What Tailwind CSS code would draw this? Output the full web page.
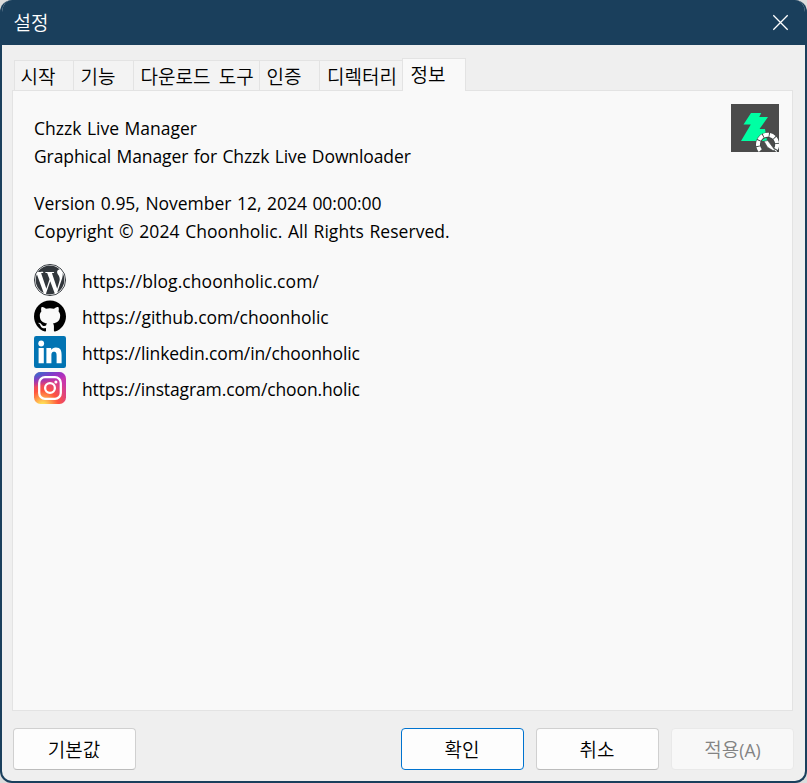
<!DOCTYPE html>
<html lang="ko">
<head>
<meta charset="utf-8">
<title>설정</title>
<script src="https://cdn.jsdelivr.net/npm/@tailwindcss/browser@4"></script>
</head>
<body class="h-[783px] w-[807px] overflow-hidden bg-[#dcdcdc] font-['Open_Sans','Noto_Sans_CJK_KR',sans-serif] text-black">
<div class="flex h-[783px] w-[807px] flex-col overflow-hidden rounded-[12px] border-2 border-t-0 border-[#1a3f5c] bg-[#efefef]">
  <header class="flex h-[45px] shrink-0 items-center justify-between bg-[#1a3f5c] pr-[16px] pl-[11.5px] text-white">
    <h1 class="pb-[2px] font-['Noto_Sans_CJK_KR',sans-serif] text-[19px] leading-none font-[350]">설정</h1>
    <svg class="size-[17px]" viewBox="0 0 17 17" fill="none" stroke="white" stroke-width="1.3"><path d="M1.3 1.3 15.7 15.7M15.7 1.3 1.3 15.7"/></svg>
  </header>
  <nav class="ml-[12px] mt-[13px] flex h-[32px] shrink-0 items-end font-['Noto_Sans_CJK_KR',sans-serif] text-[19px] leading-[30px] font-[350] whitespace-nowrap">
    <div class="h-[30px] w-[59px] border-t border-l border-[#e3e3e3] bg-[#f3f3f3] pl-[5.5px]">시작</div>
    <div class="h-[30px] w-[60px] border-t border-l border-[#e3e3e3] bg-[#f3f3f3] pl-[6.5px]">기능</div>
    <div class="h-[30px] w-[126px] border-t border-l border-[#e3e3e3] bg-[#f3f3f3] pl-[6.5px] [word-spacing:3px]">다운로드 도구</div>
    <div class="h-[30px] w-[60px] border-t border-l border-[#e3e3e3] bg-[#f3f3f3] pl-[6.5px]">인증</div>
    <div class="h-[30px] w-[83px] border-t border-l border-[#e3e3e3] bg-[#f3f3f3] pl-[7px]">디렉터리</div>
    <div class="relative z-10 -mb-px h-[33px] w-[64px] border border-b-0 border-[#e3e3e3] bg-[#f9f9f9] pl-[7.5px]">정보</div>
  </nav>
  <main class="mx-[10px] flex h-[621px] w-[781px] shrink-0 justify-between border border-[#e3e3e3] bg-[#f9f9f9] text-[17.5px] leading-[28px] whitespace-nowrap">
    <div class="pt-[23px] pl-[21px] [word-spacing:1px]">
      <p>Chzzk Live Manager</p>
      <p class="tracking-[-0.1px]">Graphical Manager for Chzzk Live Downloader</p>
      <p class="mt-[19px] tracking-[-0.02px]">Version 0.95, November 12, 2024 00:00:00</p>
      <p class="tracking-[0.05px]">Copyright © 2024 Choonholic. All Rights Reserved.</p>
      <ul class="mt-[19px] flex flex-col gap-1">
        <li class="flex h-8 items-center gap-4">
          <svg class="size-8" viewBox="0 0 24 24" fill="#32373c"><circle cx="12" cy="12" r="11.7" fill="#fff" stroke="#32373c" stroke-width=".7"/><path d="M21.469 6.825c.84 1.537 1.318 3.3 1.318 5.175 0 3.979-2.156 7.456-5.363 9.325l3.295-9.527c.615-1.54.82-2.771.82-3.864 0-.405-.026-.78-.07-1.11m-7.981.105c.647-.03 1.232-.105 1.232-.105.582-.075.514-.93-.067-.899 0 0-1.755.135-2.88.135-1.064 0-2.85-.15-2.85-.15-.585-.03-.661.855-.075.885 0 0 .54.061 1.125.09l1.68 4.605-2.37 7.08L5.354 6.9c.649-.03 1.234-.1 1.234-.1.585-.075.516-.93-.065-.896 0 0-1.746.138-2.874.138-.2 0-.438-.008-.69-.015C4.911 3.15 8.235 1.215 12 1.215c2.809 0 5.365 1.072 7.286 2.833-.046-.003-.091-.009-.141-.009-1.06 0-1.812.923-1.812 1.914 0 .89.513 1.643 1.06 2.531.411.72.89 1.643.89 2.977 0 .915-.354 1.994-.821 3.479l-1.075 3.585-3.9-11.61zM12 22.784c-1.059 0-2.081-.153-3.048-.437l3.237-9.406 3.315 9.087c.024.053.05.101.078.149-1.12.393-2.325.609-3.582.609M1.211 12c0-1.564.336-3.05.935-4.39L7.29 21.709C3.694 19.96 1.212 16.271 1.211 12"/></svg>
          <span class="pt-[2px] tracking-[0.07px]">https://blog.choonholic.com/</span>
        </li>
        <li class="flex h-8 items-center gap-4">
          <svg class="size-8" viewBox="0 0.2 24 23.6"><path d="M12 .297c-6.63 0-12 5.373-12 12 0 5.303 3.438 9.8 8.205 11.385.6.113.82-.258.82-.577 0-.285-.01-1.04-.015-2.04-3.338.724-4.042-1.61-4.042-1.61C4.422 18.07 3.633 17.7 3.633 17.7c-1.087-.744.084-.729.084-.729 1.205.084 1.838 1.236 1.838 1.236 1.07 1.835 2.809 1.305 3.495.998.108-.776.417-1.305.76-1.605-2.665-.3-5.466-1.332-5.466-5.93 0-1.31.465-2.38 1.235-3.22-.135-.303-.54-1.523.105-3.176 0 0 1.005-.322 3.3 1.23.96-.267 1.98-.399 3-.405 1.02.006 2.04.138 3 .405 2.28-1.552 3.285-1.23 3.285-1.23.645 1.653.24 2.873.12 3.176.765.84 1.23 1.91 1.23 3.22 0 4.61-2.805 5.625-5.475 5.92.42.36.81 1.096.81 2.22 0 1.606-.015 2.896-.015 3.286 0 .315.21.69.825.57C20.565 22.092 24 17.592 24 12.297c0-6.627-5.373-12-12-12"/></svg>
          <span class="pt-[2px] tracking-[-0.03px]">https://github.com/choonholic</span>
        </li>
        <li class="flex h-8 items-center gap-4">
          <svg class="size-8" viewBox="0 0 32 32"><rect width="32" height="32" rx="2.2" fill="#0274b3"/><g fill="#fff"><circle cx="7.2" cy="7.5" r="2.9"/><path d="M4.6 12h5.2v15.3H4.6zM12.4 12h4.8v2.1c.8-1.4 2.4-2.5 4.6-2.5 4.8 0 5.8 3.2 5.8 7.3v8.4h-5v-7.4c0-1.8 0-4.1-2.5-4.1s-2.7 1.9-2.7 3.9v7.6h-5z"/></g></svg>
          <span class="pt-[2px] tracking-[-0.1px]">https://linkedin.com/in/choonholic</span>
        </li>
        <li class="flex h-8 items-center gap-4">
          <svg class="size-8" viewBox="0 0 32 32"><defs><radialGradient id="warm" cx=".27" cy="1.07" r=".99"><stop offset="0" stop-color="#fd5"/><stop offset=".1" stop-color="#fd5"/><stop offset=".5" stop-color="#ff543e"/><stop offset="1" stop-color="#c837ab"/></radialGradient><radialGradient id="cool" gradientUnits="userSpaceOnUse" cx="0" cy="0" r="1" gradientTransform="translate(-5.3 2.3) rotate(79) scale(14 58)"><stop offset="0" stop-color="#3771c8"/><stop offset=".13" stop-color="#3771c8"/><stop offset="1" stop-color="#60f" stop-opacity="0"/></radialGradient></defs><rect width="32" height="32" rx="6.5" fill="url(#warm)"/><rect width="32" height="32" rx="6.5" fill="url(#cool)"/><rect x="5.2" y="5.2" width="21.6" height="21.6" rx="5.8" fill="none" stroke="#fff" stroke-width="2.3"/><circle cx="16" cy="16" r="4.9" fill="none" stroke="#fff" stroke-width="2.3"/><circle cx="21.9" cy="10.1" r="1.5" fill="#fff"/></svg>
          <span class="pt-[2px] tracking-[-0.12px]">https://instagram.com/choon.holic</span>
        </li>
      </ul>
    </div>
    <svg class="mt-[13px] mr-[13px] size-12" viewBox="0 0 48 48"><path fill="#4b4b4b" d="M0 0h48v48H0z"/><path fill="#00ffa3" d="M20 9h10.2l-2 4H37l-8.5 12H34l2 12H10l9.8-16.5H12.5z"/><path d="M29.5 46.6a9.4 9.4 0 1 1 14.2 0" fill="none" stroke="#3c4443" stroke-width="5.2"/><path d="M29.3 46.6a9.6 9.6 0 1 1 14.6 0" fill="none" stroke="#fff" stroke-width="4" stroke-dasharray="5.3 .9" stroke-dashoffset="1"/><path fill="#fff" stroke="#3c4443" stroke-width=".6" d="M33 37.2l3.8-.6 6.6 8.8-1 1.4-5.9-3.6z"/></svg>
  </main>
  <footer class="mt-[17px] mr-[11px] ml-[11px] flex h-[42px] shrink-0 gap-[12px] font-['Noto_Sans_CJK_KR',sans-serif] text-[19px] leading-[40px] font-[350]">
    <button class="mr-auto h-[42px] w-[123px] rounded-[4px] border border-[#d0d0d0] border-b-[#bcbcbc] bg-[#fdfdfd] pr-px">기본값</button>
    <button class="h-[42px] w-[123px] rounded-[4px] border border-[#0073cf] bg-[#fdfdfd] pr-px">확인</button>
    <button class="h-[42px] w-[123px] rounded-[4px] border border-[#d0d0d0] border-b-[#bcbcbc] bg-[#fdfdfd] pr-px">취소</button>
    <button class="h-[42px] w-[123px] rounded-[4px] border border-[#e9e9e9] bg-[#f8f8f8] text-[#838383]">적용<span class="font-['Open_Sans',sans-serif] text-[17.5px] font-normal">(A)</span></button>
  </footer>
</div>
</body>
</html>
